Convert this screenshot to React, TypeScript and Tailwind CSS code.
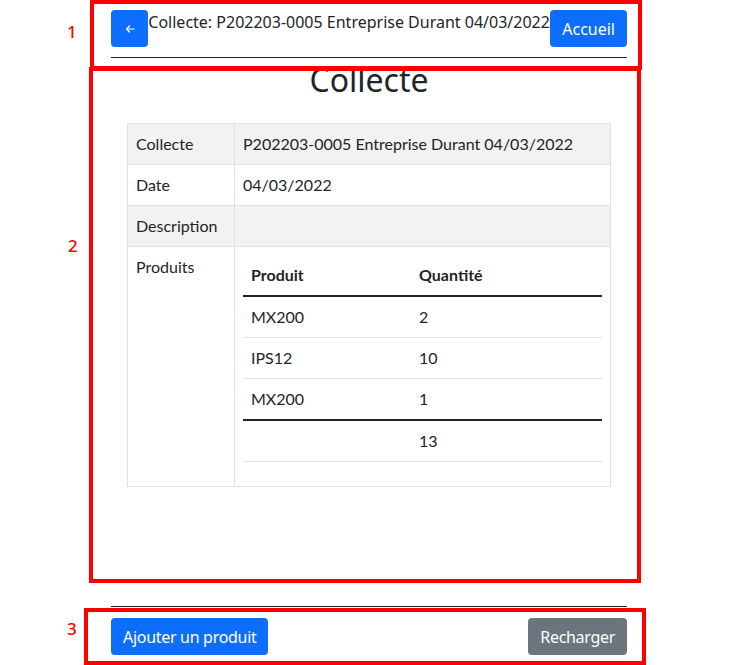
import React from "react";

const ui = { fontFamily: '"Noto Sans", "Open Sans", sans-serif' };
const tbl = { fontFamily: 'Lato, "Noto Sans", sans-serif' };

export default function App() {
  const rows = [
    ["MX200", "2"],
    ["IPS12", "10"],
    ["MX200", "1"],
  ];
  return (
    <div className="relative h-[665px] w-[738px] overflow-hidden bg-white text-[#212529]" style={ui}>
      <div className="mx-auto flex h-full w-[516px] flex-col">
        {/* header */}
        <div className="flex items-start border-b border-[#212529] pt-[10px] pb-[10px]">
          <button className="flex h-[37px] w-[37px] items-center justify-center rounded-[4px] bg-[#0d6efd] text-white">
            <svg width="10" height="10" viewBox="0 0 10 10" fill="none" stroke="white" strokeWidth="1.2" strokeLinecap="round" strokeLinejoin="round">
              <path d="M9 5H1.5M4.5 2 1.5 5l3 3" />
            </svg>
          </button>
          <div className="flex-1 text-center text-[16px] leading-[24px] whitespace-nowrap">
            Collecte: P202203-0005 Entreprise Durant 04/03/2022
          </div>
          <button className="h-[37px] rounded-[4px] bg-[#0d6efd] px-[12px] text-[16px] text-white">Accueil</button>
        </div>

        {/* main */}
        <div className="flex-1 px-4">
          <h2 className="mt-[3px] mb-[24px] text-center text-[32px] leading-[38px] font-normal">Collecte</h2>
          <table className="w-full border-collapse text-[16px] leading-[24px]" style={tbl}>
            <tbody>
              <tr className="bg-[#f2f2f2]">
                <td className="w-[107px] border border-[#dee2e6] px-2 py-2 align-top">Collecte</td>
                <td className="border border-[#dee2e6] px-2 py-2">P202203-0005 Entreprise Durant 04/03/2022</td>
              </tr>
              <tr>
                <td className="border border-[#dee2e6] px-2 py-2">Date</td>
                <td className="border border-[#dee2e6] px-2 py-2">04/03/2022</td>
              </tr>
              <tr className="bg-[#f2f2f2]">
                <td className="border border-[#dee2e6] px-2 py-2">Description</td>
                <td className="h-[41px] border border-[#dee2e6] px-2 py-2"></td>
              </tr>
              <tr>
                <td className="border border-[#dee2e6] px-2 py-2 align-top">Produits</td>
                <td className="border border-[#dee2e6] px-2 py-2 align-top">
                  <table className="mb-4 w-full border-collapse">
                    <thead>
                      <tr className="border-b-2 border-[#212529]">
                        <th className="w-[168px] px-2 py-2 text-left font-bold">Produit</th>
                        <th className="px-2 py-2 text-left font-bold">Quantité</th>
                      </tr>
                    </thead>
                    <tbody>
                      {rows.map((r, i) => (
                        <tr key={i} className={i === 2 ? "border-b-2 border-[#212529]" : "border-b border-[#dee2e6]"}>
                          <td className="px-2 py-2">{r[0]}</td>
                          <td className="px-2 py-2">{r[1]}</td>
                        </tr>
                      ))}
                      <tr className="border-b border-[#dee2e6]">
                        <td className="px-2 py-2"></td>
                        <td className="px-2 py-2">13</td>
                      </tr>
                    </tbody>
                  </table>
                </td>
              </tr>
            </tbody>
          </table>
        </div>

        {/* footer */}
        <div className="flex items-start justify-between border-t border-[#212529] pt-[11px] pb-[10px]">
          <button className="h-[37px] rounded-[4px] bg-[#0d6efd] px-[12px] text-[16px] text-white tracking-[-0.3px]">Ajouter un produit</button>
          <button className="h-[37px] rounded-[4px] bg-[#6c757d] px-[12px] text-[16px] text-white tracking-[-0.3px]">Recharger</button>
        </div>
      </div>

      {/* annotations */}
      <div className="pointer-events-none absolute left-[90px] top-0 h-[70px] w-[552px] border-[4px] border-[#ff0000]" />
      <div className="pointer-events-none absolute left-[89px] top-[67px] h-[516px] w-[552px] border-[4px] border-[#ff0000]" />
      <div className="pointer-events-none absolute left-[84px] top-[608px] h-[57px] w-[562px] border-[4px] border-[#ff0000]" />
      <div className="absolute left-[67px] top-[20px] text-[17px] font-medium leading-[24px] text-[#ff0000]">1</div>
      <div className="absolute left-[68px] top-[234px] text-[17px] font-medium leading-[24px] text-[#ff0000]">2</div>
      <div className="absolute left-[67px] top-[617px] text-[17px] font-medium leading-[24px] text-[#ff0000]">3</div>
    </div>
  );
}
